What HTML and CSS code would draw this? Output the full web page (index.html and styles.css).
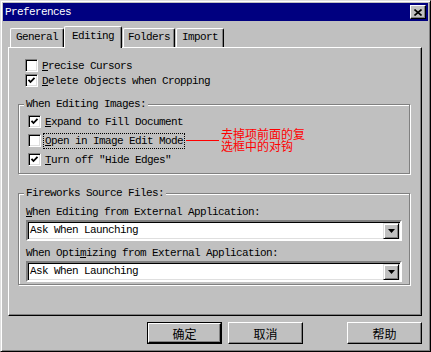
FILE: index.html
```html
<!DOCTYPE html>
<html lang="en">
<head>
  <meta charset="UTF-8">
  <title>Preferences</title>
  <link rel="stylesheet" href="styles.css">
</head>
<body>

<div class="window">
  <div class="titlebar">
    <span class="title">Preferences</span>
    <span class="close">
      <svg width="8" height="7" viewBox="0 0 8 7"><path d="M0.5 0.5 L7.5 6.5 M7.5 0.5 L0.5 6.5" stroke="#000" stroke-width="1.6" fill="none"/></svg>
    </span>
  </div>

  <div class="tabs">
    <div class="tab tab-general">General</div>
    <div class="tab tab-editing selected">Editing</div>
    <div class="tab tab-folders">Folders</div>
    <div class="tab tab-import">Import</div>
  </div>

  <div class="panel">
    <div class="rows">
      <div class="row">
        <span class="check"></span>
        <span class="label"><u>P</u>recise Cursors</span>
      </div>
      <div class="row">
        <span class="check checked"><svg width="9" height="9" viewBox="0 0 9 9"><polyline points="1.5,3.8 3.5,6 7.5,1.8" stroke="#000" stroke-width="1.8" fill="none"/></svg></span>
        <span class="label"><u>D</u>elete Objects when Cropping</span>
      </div>
    </div>

    <fieldset class="group group-images">
      <legend>When Editing Images:</legend>
      <div class="group-body rows rows-wide">
        <div class="row">
          <span class="check checked"><svg width="9" height="9" viewBox="0 0 9 9"><polyline points="1.5,3.8 3.5,6 7.5,1.8" stroke="#000" stroke-width="1.8" fill="none"/></svg></span>
          <span class="label"><u>E</u>xpand to Fill Document</span>
        </div>
        <div class="row note-row">
          <span class="check"></span>
          <span class="label focus"><u>O</u>pen in Image Edit Mode</span>
          <span class="note-line"></span>
          <span class="note">去掉项前面的复<br>选框中的对钩</span>
        </div>
        <div class="row">
          <span class="check checked"><svg width="9" height="9" viewBox="0 0 9 9"><polyline points="1.5,3.8 3.5,6 7.5,1.8" stroke="#000" stroke-width="1.8" fill="none"/></svg></span>
          <span class="label"><u>T</u>urn off "Hide Edges"</span>
        </div>
      </div>
    </fieldset>

    <fieldset class="group group-source">
      <legend>Fireworks Source Files:</legend>
      <div class="group-body">
        <div class="field-label"><u>W</u>hen Editing from External Application:</div>
        <div class="select">
          <span class="select-text">Ask When Launching</span>
          <span class="select-btn"><svg width="7" height="4" viewBox="0 0 7 4"><path d="M0 0 H7 L3.5 4 Z" fill="#000"/></svg></span>
        </div>
        <div class="field-label second">When Opti<u>m</u>izing from External Application:</div>
        <div class="select">
          <span class="select-text">Ask When Launching</span>
          <span class="select-btn"><svg width="7" height="4" viewBox="0 0 7 4"><path d="M0 0 H7 L3.5 4 Z" fill="#000"/></svg></span>
        </div>
      </div>
    </fieldset>
  </div>

  <div class="buttons">
    <button class="btn default">确定</button>
    <button class="btn">取消</button>
    <button class="btn help">帮助</button>
  </div>
</div>

</body>
</html>
```

FILE: styles.css
```css
html, body {
  margin: 0;
  padding: 0;
  background-color: #c0c0c0;
  font-family: "Liberation Mono", "DejaVu Sans Mono", monospace;
  font-size: 11px;
  letter-spacing: -0.6px;
  color: #000;
}

.window {
  width: 431px;
  height: 352px;
  box-sizing: border-box;
  background-color: #c0c0c0;
  border: 1px solid;
  border-color: #dfdfdf #000 #000 #dfdfdf;
  box-shadow: inset 1px 1px #fff, inset -1px -1px #808080;
  padding: 2px;
  display: flex;
  flex-direction: column;
}

.titlebar {
  height: 18px;
  background-color: #000080;
  color: #fff;
  display: flex;
  align-items: center;
  justify-content: space-between;
  padding: 0 2px 0 2px;
}

.title {
  line-height: 18px;
}

.close {
  width: 14px;
  height: 12px;
  background-color: #c0c0c0;
  border: 1px solid;
  border-color: #fff #000 #000 #fff;
  box-shadow: inset -1px -1px #808080;
  display: flex;
  align-items: center;
  justify-content: center;
}

.tabs {
  display: flex;
  align-items: flex-end;
  height: 21px;
  margin-top: 5px;
  padding-left: 7px;
}

.tab {
  box-sizing: border-box;
  height: 19px;
  line-height: 17px;
  border: 1px solid;
  border-bottom: none;
  border-color: #fff #000 #000 #fff;
  box-shadow: inset -1px 0 #808080;
  border-radius: 2px 2px 0 0;
  text-align: center;
}

.tab-general { width: 54px; }
.tab-editing { width: 58px; }
.tab-folders { width: 52px; margin-left: 1px; }
.tab-import { width: 48px; margin-left: 1px; }

.tab.selected {
  height: 22px;
  line-height: 19px;
  margin-bottom: -1px;
  position: relative;
  z-index: 1;
  background-color: #c0c0c0;
}

.panel {
  position: relative;
  height: 269px;
  box-sizing: border-box;
  margin: 0 6px 0 5px;
  border: 1px solid;
  border-color: #fff #000 #000 #fff;
  box-shadow: inset -1px -1px #808080;
  padding: 11px 0 0 16px;
}

.rows {
  display: flex;
  flex-direction: column;
  gap: 2px;
}

.rows-wide {
  gap: 6px;
}

.row {
  display: flex;
  align-items: center;
  height: 13px;
}

.check {
  width: 13px;
  height: 13px;
  box-sizing: border-box;
  flex: none;
  background-color: #fff;
  border: 1px solid;
  border-color: #808080 #fff #fff #808080;
  box-shadow: inset 1px 1px #000, inset -1px -1px #dfdfdf;
  display: flex;
  align-items: center;
  justify-content: center;
}

.label {
  margin-left: 2px;
  padding: 0 1px;
  line-height: 14px;
  border: 1px dotted transparent;
  white-space: nowrap;
}

.label.focus {
  border-color: #000;
}

.group {
  margin: 11px 11px 0 -7px;
  padding: 0;
  border: 1px solid #808080;
  box-shadow: 1px 1px #fff, inset 1px 1px #fff;
}

.group legend {
  margin-left: 5px;
  padding: 0 2px;
  line-height: 12px;
  background-color: #c0c0c0;
}

.group-body {
  padding: 5px 7px 7px 9px;
}

.group-source {
  margin-top: 13px;
}

.group-source .group-body {
  padding: 7px 7px 2px 7px;
}

.field-label {
  line-height: 12px;
  margin-bottom: 2px;
  white-space: nowrap;
}

.field-label.second {
  margin-top: 6px;
}

.select {
  height: 21px;
  box-sizing: border-box;
  background-color: #fff;
  border: 2px solid;
  border-color: #808080 #fff #fff #808080;
  box-shadow: inset 1px 1px #000, inset -1px -1px #dfdfdf;
  display: flex;
  align-items: center;
  justify-content: space-between;
  padding: 0 1px 0 2px;
}

.select-text {
  line-height: 15px;
}

.select-btn {
  width: 16px;
  height: 16px;
  box-sizing: border-box;
  background-color: #c0c0c0;
  border: 1px solid;
  border-color: #dfdfdf #000 #000 #dfdfdf;
  box-shadow: inset 1px 1px #fff, inset -1px -1px #808080;
  display: flex;
  align-items: center;
  justify-content: center;
}

.note-row {
  position: relative;
}

.note-line {
  position: absolute;
  left: 158px;
  top: 6px;
  width: 33px;
  height: 1px;
  background-color: #ff0000;
}

.note {
  position: absolute;
  left: 193px;
  top: -6px;
  font-family: "Noto Sans CJK SC", sans-serif;
  font-size: 12px;
  letter-spacing: 0;
  line-height: 12px;
  color: #ff0000;
  white-space: nowrap;
}

.buttons {
  display: flex;
  justify-content: flex-end;
  gap: 6px;
  padding-right: 6px;
  margin-top: 6px;
}

.btn {
  width: 75px;
  height: 22px;
  box-sizing: border-box;
  margin: 0;
  padding: 0;
  font-family: "Noto Sans CJK SC", sans-serif;
  font-size: 12px;
  letter-spacing: 0;
  color: #000;
  background-color: #c0c0c0;
  border: 1px solid;
  border-color: #fff #000 #000 #fff;
  box-shadow: inset -1px -1px #808080;
}

.btn.default {
  border: 2px solid #000;
  border-color: #fff #000 #000 #fff;
  box-shadow: inset -1px -1px #808080;
  outline: 1px solid #000;
  outline-offset: -1px;
}

.btn.help {
  margin-left: 38px;
}
```
